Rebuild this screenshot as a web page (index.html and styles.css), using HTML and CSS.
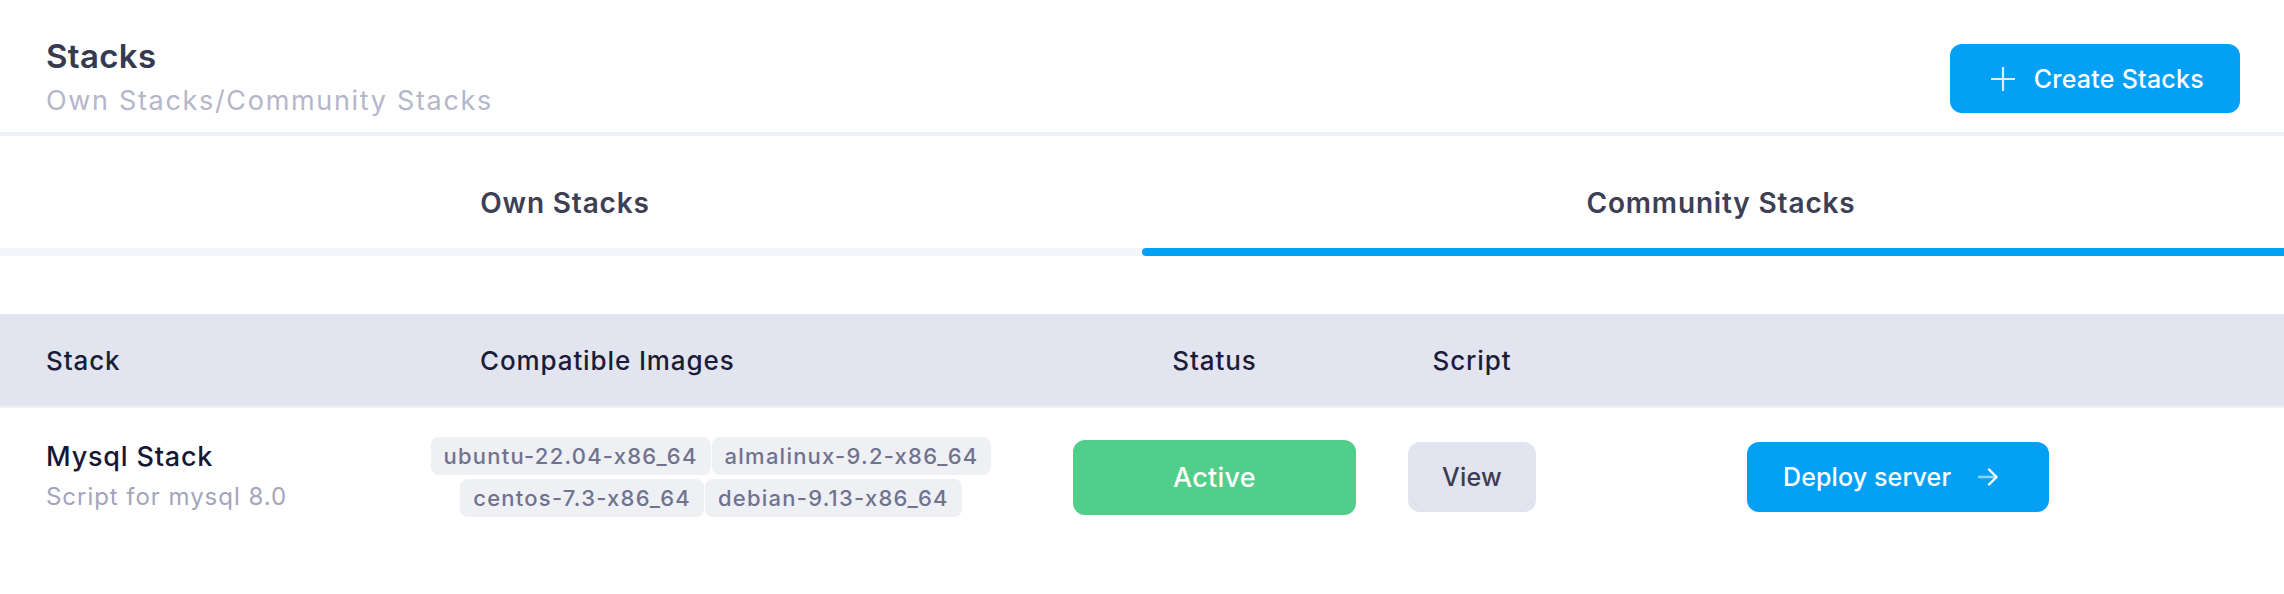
FILE: index.html
```html
<!DOCTYPE html>
<html lang="en">
<head>
<meta charset="utf-8">
<title>Stacks</title>
<link rel="stylesheet" href="styles.css">
</head>
<body>
<div class="page">
  <header class="top">
    <div class="heading">
      <h1 class="title">Stacks</h1>
      <p class="subtitle">Own Stacks/Community Stacks</p>
    </div>
    <button class="btn-create" type="button">
      <svg class="icon-plus" width="24" height="24" viewBox="0 0 24 24" aria-hidden="true"><path d="M12 0V24M0 12H24" fill="none" stroke="currentColor" stroke-width="2.2"/></svg>
      <span>Create Stacks</span>
    </button>
  </header>

  <nav class="tabs">
    <div class="tab tab-own">
      <div class="tab-label">Own Stacks</div>
      <div class="tab-bar"></div>
    </div>
    <div class="tab tab-community tab-active">
      <div class="tab-label">Community Stacks</div>
      <div class="tab-bar"></div>
    </div>
  </nav>

  <section class="table">
    <div class="thead grid">
      <div class="th">Stack</div>
      <div class="th th-images">Compatible Images</div>
      <div class="th th-status">Status</div>
      <div class="th th-script">Script</div>
      <div class="th"></div>
    </div>
    <div class="trow grid">
      <div class="cell-stack">
        <div class="stack-name">Mysql Stack</div>
        <div class="stack-desc">Script for mysql 8.0</div>
      </div>
      <div class="chips">
        <span class="chip">ubuntu-22.04-x86_64</span>
        <span class="chip">almalinux-9.2-x86_64</span>
        <span class="chip">centos-7.3-x86_64</span>
        <span class="chip">debian-9.13-x86_64</span>
      </div>
      <div class="cell"><span class="status-active">Active</span></div>
      <div class="cell"><button class="btn-view" type="button">View</button></div>
      <div class="cell">
        <button class="btn-deploy" type="button">
          <span>Deploy server</span>
          <svg class="icon-arrow" width="20" height="20" viewBox="0 0 20 20" aria-hidden="true"><path class="shaft" d="M1 10H18" fill="none" stroke="currentColor" stroke-width="2.4" stroke-linecap="round"/><path d="M11 2.5L18.5 10L11 17.5" fill="none" stroke="currentColor" stroke-width="2.4" stroke-linecap="round" stroke-linejoin="round"/></svg>
        </button>
      </div>
    </div>
  </section>
</div>
</body>
</html>
```

FILE: styles.css
```css
* {
  box-sizing: border-box;
  margin: 0;
  padding: 0;
}

body {
  margin: 0;
  background: #ffffff;
  font-family: Inter, "Open Sans", sans-serif;
}

.page {
  width: 100%;
}

/* Header */
.top {
  display: flex;
  justify-content: space-between;
  align-items: center;
  height: 136px;
  padding: 25px 44px 0 46px;
  border-bottom: 4px solid #eef1f5;
}

.title {
  font-size: 33px;
  font-weight: 600;
  line-height: 38px;
  color: #363a50;
  letter-spacing: 0.01em;
}

.subtitle {
  font-size: 27px;
  font-weight: 400;
  line-height: 38px;
  margin-top: 7px;
  color: #b5b6c9;
  letter-spacing: 0.062em;
}

.btn-create {
  display: flex;
  align-items: center;
  gap: 19px;
  height: 69px;
  padding: 0 36px 0 41px;
  background: #03a0f5;
  color: #ffffff;
  border: 0;
  border-radius: 12px;
  font-family: inherit;
  font-size: 25px;
  font-weight: 500;
  letter-spacing: 0.01em;
}

.icon-plus {
  opacity: 0.85;
}

/* Tabs */
.tabs {
  display: flex;
}

.tab {
  flex: 1;
  display: flex;
  flex-direction: column;
  height: 120px;
}

.tab-label {
  flex: 1;
  display: flex;
  align-items: center;
  justify-content: center;
  padding-top: 21px;
  font-size: 28px;
  font-weight: 600;
  color: #3d4055;
  letter-spacing: 0.03em;
}

.tab-own .tab-label {
  padding-right: 12px;
}

.tab-community .tab-label {
  padding-left: 16px;
}

.tab-bar {
  height: 8px;
  background: #f2f6fa;
}

.tab-active .tab-bar {
  background: #03a0f5;
  border-radius: 4px 0 0 4px;
}

/* Table */
.table {
  margin-top: 58px;
}

.grid {
  display: grid;
  grid-template-columns: 384px 643px 335px 339px 1fr;
  padding-left: 46px;
  align-items: center;
}

.thead {
  height: 94px;
  background: #e2e5ef;
  border-bottom: 2px solid #eef1f5;
}

.th {
  font-size: 26px;
  font-weight: 500;
  color: #1b1d38;
  letter-spacing: 0.034em;
}

.th-images {
  padding-left: 50px;
}

.th-status {
  width: 283px;
  text-align: center;
}

.th-script {
  width: 128px;
  text-align: center;
}

.trow {
  padding-top: 29px;
  padding-bottom: 29px;
}

.stack-name {
  font-size: 27px;
  font-weight: 500;
  line-height: 36px;
  color: #151834;
  letter-spacing: 0.03em;
}

.stack-desc {
  font-size: 24px;
  line-height: 36px;
  margin-top: 4px;
  color: #a3a5bc;
  letter-spacing: 0.04em;
}

.chips {
  width: 562px;
  display: flex;
  flex-wrap: wrap;
  justify-content: center;
  gap: 4px 1px;
}

.chip {
  display: inline-flex;
  align-items: center;
  height: 38px;
  padding: 0 13px;
  border-radius: 8px;
  background: #eef0f4;
  color: #70738f;
  font-size: 22px;
  font-weight: 500;
  letter-spacing: 0.056em;
}

.cell {
  display: flex;
  align-items: center;
}

.status-active {
  display: flex;
  align-items: center;
  justify-content: center;
  width: 283px;
  height: 75px;
  border-radius: 12px;
  background: #51ce89;
  color: #ffffff;
  font-size: 27px;
  font-weight: 500;
  letter-spacing: 0.01em;
}

.btn-view {
  width: 128px;
  height: 70px;
  border: 0;
  border-radius: 12px;
  background: #e2e5ef;
  color: #3b3d55;
  font-family: inherit;
  font-size: 25px;
  font-weight: 500;
  letter-spacing: 0.01em;
}

.btn-deploy {
  display: flex;
  align-items: center;
  gap: 27px;
  width: 302px;
  height: 70px;
  padding: 0 0 0 36px;
  border: 0;
  border-radius: 12px;
  background: #03a0f5;
  color: #ffffff;
  font-family: inherit;
  font-size: 25px;
  font-weight: 500;
  letter-spacing: 0.005em;
}

.icon-arrow .shaft {
  opacity: 0.55;
}
```
